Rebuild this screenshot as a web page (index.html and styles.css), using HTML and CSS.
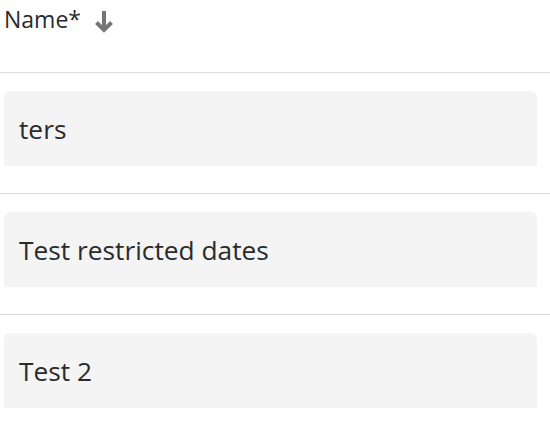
FILE: index.html
```html
<!DOCTYPE html>
<html>
<head>
<meta charset="utf-8">
<link rel="stylesheet" href="styles.css">
</head>
<body>
<div class="table">
  <div class="header">
    <span class="header-label">Name*</span>
    <svg class="sort-icon" width="20" height="22" viewBox="0 0 20 22">
      <path d="M10 0 V19" stroke="#767676" stroke-width="4" fill="none"/>
      <path d="M2.5 11.5 L10 19 L17.5 11.5" stroke="#767676" stroke-width="4" fill="none"/>
    </svg>
  </div>
  <div class="row"><div class="cell">ters</div></div>
  <div class="row"><div class="cell">Test restricted dates</div></div>
  <div class="row"><div class="cell">Test 2</div></div>
</div>
</body>
</html>
```
FILE: styles.css
```css
html, body {
  margin: 0;
  padding: 0;
  background: #ffffff;
}
body {
  font-family: "Open Sans", "Noto Sans", sans-serif;
  color: #2b2b2b;
  width: 550px;
  overflow: hidden;
}
.header {
  height: 72px;
  display: flex;
  align-items: flex-start;
  padding: 4px 0 0 4px;
  box-sizing: border-box;
  gap: 13px;
}
.header-label {
  font-size: 23px;
  line-height: 30px;
}
.sort-icon {
  margin-top: 7px;
}
.row {
  border-top: 1px solid #dcdcdc;
  padding: 18px 13px 27px 4px;
}
.cell {
  background: #f4f4f4;
  border-radius: 6px 6px 0 0;
  height: 75px;
  display: flex;
  align-items: center;
  padding: 0 15px;
  font-size: 26.3px;
  box-sizing: border-box;
}
```
